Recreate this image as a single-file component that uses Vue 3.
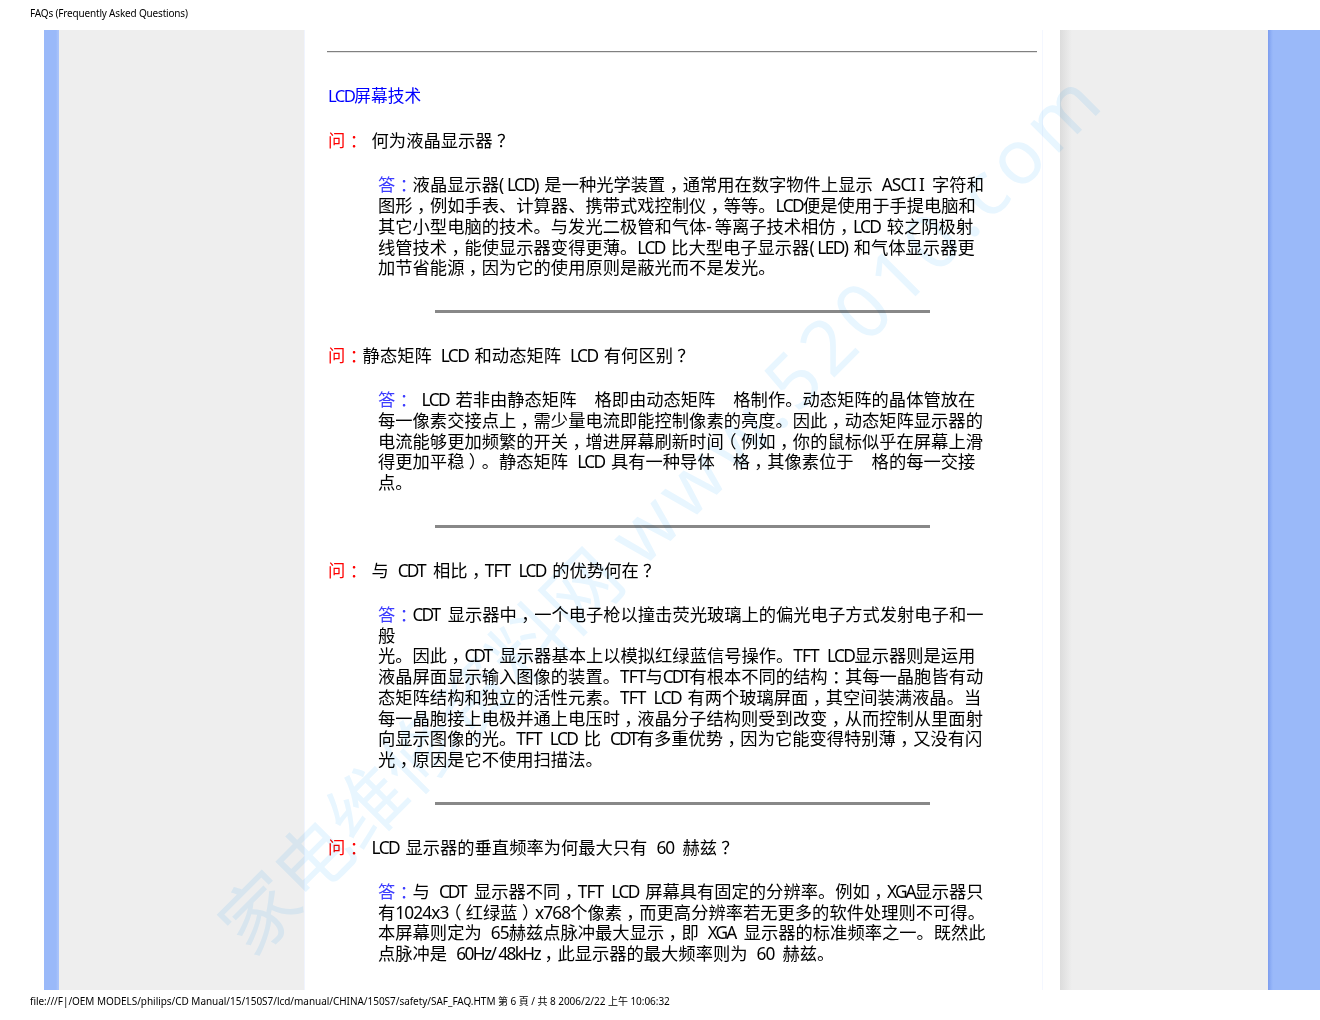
<template>
  <div class="page">
    <div class="top-title">FAQs (Frequently Asked Questions)</div>
    <div class="sheet">
      <div class="left-bar"></div>
      <div class="left-grey"></div>
      <div class="content">
        <hr class="top-rule" />
        <h1 class="heading"><span class="lcd">LCD</span>屏幕技术</h1>
        <section v-for="(item, i) in faqs" :key="i" class="faq">
          <hr v-if="i > 0" class="rule" />
          <div class="question">
            <span class="q-label"><template v-for="(run, k) in splitRuns('问：')" :key="k"><span :class="run.cls">{{ run.text }}</span></template></span>
            <template v-for="(run, k) in splitRuns(item.q)" :key="k"><span :class="run.cls">{{ run.text }}</span></template>
          </div>
          <div class="answer">
            <div v-for="(line, n) in item.a" :key="n" class="line">
              <span v-if="n === 0" class="a-label"><template v-for="(run, k) in splitRuns('答：')" :key="k"><span :class="run.cls">{{ run.text }}</span></template></span>
              <template v-for="(run, k) in splitRuns(line)" :key="k"><span :class="run.cls">{{ run.text }}</span></template>
            </div>
          </div>
        </section>
      </div>
      <div class="right-grey"></div>
      <div class="right-bar"></div>
    </div>
    <div class="bottom-line">file:///F|/OEM MODELS/philips/CD Manual/15/150S7/lcd/manual/CHINA/150S7/safety/SAF_FAQ.HTM 第 6 頁 / 共 8 2006/2/22 上午 10:06:32</div>
    <div class="watermark">家电维修资料网 <span class="wm-latin">www.52010.com</span></div>
  </div>
</template>

<script setup>
const faqs = [
  {
    q: '  何为液晶显示器？',
    a: [
      '液晶显示器( LCD) 是一种光学装置，通常用在数字物件上显示  ASCI I  字符和',
      '图形，例如手表、计算器、携带式戏控制仪，等等。LCD便是使用于手提电脑和',
      '其它小型电脑的技术。与发光二极管和气体- 等离子技术相仿，LCD 较之阴极射',
      '线管技术，能使显示器变得更薄。LCD 比大型电子显示器( LED) 和气体显示器更',
      '加节省能源，因为它的使用原则是蔽光而不是发光。',
    ],
  },
  {
    q: '静态矩阵  LCD 和动态矩阵  LCD 有何区别？',
    a: [
      '  LCD 若非由静态矩阵    格即由动态矩阵    格制作。动态矩阵的晶体管放在',
      '每一像素交接点上，需少量电流即能控制像素的亮度。因此，动态矩阵显示器的',
      '电流能够更加频繁的开关，增进屏幕刷新时间（例如，你的鼠标似乎在屏幕上滑',
      '得更加平稳）。静态矩阵  LCD 具有一种导体    格，其像素位于    格的每一交接',
      '点。',
    ],
  },
  {
    q: '  与  CDT  相比，TFT  LCD 的优势何在？',
    a: [
      'CDT  显示器中，一个电子枪以撞击荧光玻璃上的偏光电子方式发射电子和一',
      '般',
      '光。因此，CDT  显示器基本上以模拟红绿蓝信号操作。TFT  LCD显示器则是运用',
      '液晶屏面显示输入图像的装置。TFT与CDT有根本不同的结构：其每一晶胞皆有动',
      '态矩阵结构和独立的活性元素。TFT  LCD 有两个玻璃屏面，其空间装满液晶。当',
      '每一晶胞接上电极并通上电压时，液晶分子结构则受到改变，从而控制从里面射',
      '向显示图像的光。TFT  LCD 比  CDT有多重优势，因为它能变得特别薄，又没有闪',
      '光，原因是它不使用扫描法。',
    ],
  },
  {
    q: '  LCD 显示器的垂直频率为何最大只有  60  赫兹？',
    a: [
      '与  CDT  显示器不同，TFT  LCD 屏幕具有固定的分辨率。例如，XGA显示器只',
      '有1024x3（红绿蓝）x768个像素，而更高分辨率若无更多的软件处理则不可得。',
      '本屏幕则定为  65赫兹点脉冲最大显示，即  XGA  显示器的标准频率之一。既然此',
      '点脉冲是  60Hz/ 48kHz，此显示器的最大频率则为  60  赫兹。',
    ],
  },
]

// latin runs sit tighter than the CJK grid, full-width punctuation sits mid-cell
function splitRuns(text) {
  return text
    .split(/([A-Za-z0-9./\-()]+ ?|[，：？（）])/)
    .filter((t) => t.length)
    .map((t) => {
      let cls = ''
      if (/^(LCD|LED|LCD\)|LED\)) $/.test(t)) cls = 'lcd wide'
      else if (/^(CDT|XGA) ?$/.test(t)) cls = 'tight'
      else if (/^(LCD|LED|60Hz\/|48kHz) ?$/.test(t)) cls = 'lcd'
      else if (/^[，：？（）]$/.test(t)) cls = 'punct'
      else if (/^[A-Za-z0-9./\-()]+ ?$/.test(t)) cls = 'lat'
      return { text: t, cls }
    })
}
</script>

<style>
html,
body {
  margin: 0;
  background: #ffffff;
}
</style>

<style scoped>
.page {
  position: relative;
  width: 1320px;
  height: 1020px;
  overflow: hidden;
  background: #ffffff;
  font-family: "Noto Sans", "Noto Sans CJK SC", sans-serif;
  color: #000000;
}

.top-title {
  height: 30px;
  padding: 6px 0 0 30px;
  box-sizing: border-box;
  font-size: 10px;
  line-height: 14px;
  letter-spacing: -0.18px;
  white-space: nowrap;
}

.sheet {
  display: flex;
  height: 960px;
  padding-left: 44px;
  overflow: hidden;
}

.left-bar {
  width: 15px;
  background: linear-gradient(to right, #9ab9f9 0, #9ab9f9 12px, #a9c3fa 14px);
}

.left-grey {
  width: 245px;
  background: #eeeeee;
  border-right: 1px solid #f0f4fe;
}

.content {
  width: 715px;
  padding-left: 22px;
  border-right: 1px solid #f4f7ff;
  margin-right: 17px;
  font-size: 17.3px;
  line-height: 20.75px;
  white-space: pre;
}

.top-rule {
  width: 710px;
  height: 2px;
  margin: 21px 0 0;
  border: 0;
  background: linear-gradient(to bottom, #808080 50%, #e4e4e4 50%);
}

.heading {
  margin: 33px 0 0 1px;
  font-size: 16.7px;
  font-weight: 400;
  line-height: 20.75px;
  color: #0000ff;
}

.question {
  margin: 24.5px 0 0 1px;
}

.q-label {
  color: #ff0000;
}

.answer {
  margin: 23.25px 0 0 51px;
}

.line {
  height: 20.75px;
}

.a-label {
  color: #3c3cff;
}

.lat {
  letter-spacing: -0.9px;
}

.lcd {
  letter-spacing: -1.6px;
}

.wide {
  word-spacing: 3.5px;
}

.tight {
  letter-spacing: -2px;
  word-spacing: 1.5px;
}

/* halt trims the glyph to its ink, centring it in a full cell */
.punct {
  display: inline-block;
  width: 1em;
  text-align: center;
  font-feature-settings: "halt";
}

.rule {
  width: 495px;
  height: 3px;
  margin: 31.25px 0 32.75px 108px;
  border: 0;
  background: #888888;
}

.right-grey {
  width: 208px;
  background: linear-gradient(to right, #dcdcdc 0, #eeeeee 12px);
}

.right-bar {
  width: 52px;
  background: linear-gradient(to right, #7c9bee 0, #8fb0f6 3px, #9ab9f9 5px);
}

.bottom-line {
  padding: 4px 0 0 30px;
  font-size: 10px;
  line-height: 14px;
  letter-spacing: -0.04px;
  white-space: nowrap;
}

.watermark {
  position: absolute;
  left: 205px;
  top: 912px;
  font-size: 76px;
  line-height: 76px;
  color: #e8f6ff;
  white-space: nowrap;
  transform: rotate(-45deg);
  transform-origin: 0 0;
  mix-blend-mode: multiply;
  pointer-events: none;
}

.wm-latin {
  letter-spacing: 5.5px;
}
</style>
